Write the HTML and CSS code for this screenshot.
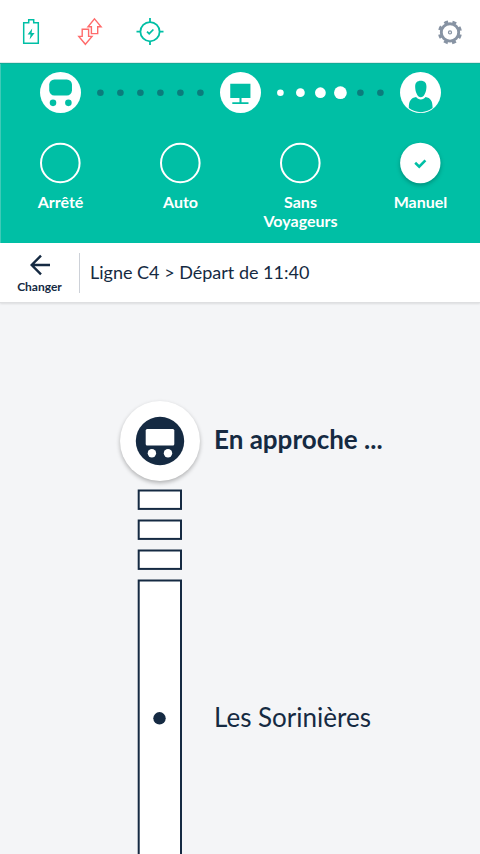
FILE: index.html
```html
<!DOCTYPE html>
<html lang="fr">
<head>
<meta charset="utf-8">
<meta name="viewport" content="width=device-width, initial-scale=1">
<title>Ligne C4</title>
<link rel="stylesheet" href="styles.css">
</head>
<body>
<header class="status">
  <svg class="status-icon" viewBox="0 0 60 62" fill="none" stroke="#00bfa5" stroke-width="1.5"><path d="M23.7 22.7h5V19.8h5v2.9h4.6v20.6H23.7z"/><path d="M32.2 28.6l-4.6 6h3l-1 5 5-6.600h-3z" fill="#00bfa5" stroke="none"/></svg>
  <svg class="status-icon" viewBox="60 0 60 62" fill="none" stroke="#ff6b6b" stroke-width="1.4"><path d="M94.500 18.900l6.600 7.900h-3.400v6.800h-6.300v-6.800H88z"/><path d="M85.400 44.300l6.600-7.900h-3.400v-7.200h-6.400v7.200h-3.400z"/></svg>
  <svg class="status-icon" viewBox="120 0 60 62" fill="none" stroke="#00bfa5" stroke-width="1.8"><circle cx="150" cy="31.700" r="9.600"/><path d="M150 18v4.400M150 41v4M136.500 31.700h4M159.500 31.700h4"/><path d="M147 31.600l2.200 2.100 4.200-4.200" stroke-width="1.700"/></svg>
  <svg class="status-icon settings" viewBox="420 0 60 62" fill="none" stroke="#8793a3"><circle cx="450" cy="32.400" r="8.700" stroke-width="2.900"/><circle cx="450" cy="32.400" r="10.600" stroke-width="2.800" stroke-dasharray="4 4.325" transform="rotate(11.500 450 32.400)"/><circle cx="450" cy="32.400" r="1.500" stroke-width="1.300"/></svg>
</header>

<section class="panel">
  <div class="link">
    <svg class="node" viewBox="0 0 40 40"><circle cx="20" cy="20" r="20" fill="#fff"/><g fill="#00bfa5"><rect x="9" y="7.300" width="22.200" height="15.600" rx="5"/><circle cx="12.700" cy="30.100" r="3.200"/><circle cx="27.700" cy="30.100" r="3.200"/></g></svg>
    <svg class="dots" viewBox="0.600 0.300 120 20" fill="#0b7c7c"><circle cx="10" cy="10" r="3.300"/><circle cx="30" cy="10" r="3.300"/><circle cx="50" cy="10" r="3.300"/><circle cx="70" cy="10" r="3.300"/><circle cx="90" cy="10" r="3.300"/><circle cx="110" cy="10" r="3.300"/></svg>
    <svg class="node" viewBox="0 0 40 40"><circle cx="20" cy="20" r="20" fill="#fff"/><path d="M10 11.500h19.700v13.800H21v4.100h6.800v1.900H12v-1.900h7v-4.100h-9z" fill="#00bfa5"/></svg>
    <svg class="dots" viewBox="0.600 0.300 120 20" fill="#0b7c7c"><g fill="#fff"><circle cx="10" cy="10" r="3.300"/><circle cx="30" cy="10" r="4.400"/><circle cx="50" cy="10" r="5.400"/><circle cx="70" cy="10" r="6.400"/></g><circle cx="90" cy="10" r="3.300"/><circle cx="110" cy="10" r="3.300"/></svg>
    <svg class="node" viewBox="0 0 40 40"><circle cx="20" cy="20" r="20" fill="#fff"/><path d="M20.300 8.600c3.700 0 5.700 2.200 5.500 6.200-.2 4.800-2.300 9.800-5.500 9.800s-5.300-5-5.500-9.800c-.2-4 1.800-6.200 5.500-6.200zM15.700 24.500c1.100 1.300 2.600 2.300 4.600 2.300s3.500-1 4.600-2.300c4.900 1 6.900 3.600 6.900 10.700A19 19 0 0 1 8.600 35.200C8.600 28.100 10.800 25.500 15.700 24.500z" fill="#00bfa5"/></svg>
  </div>
  <div class="modes">
    <div class="mode"><svg class="radio" viewBox="0 0 42 42"><circle cx="21.300" cy="21" r="19.300"/></svg><span>Arrêté</span></div>
    <div class="mode"><svg class="radio" viewBox="0 0 42 42"><circle cx="21.300" cy="21" r="19.300"/></svg><span>Auto</span></div>
    <div class="mode"><svg class="radio" viewBox="0 0 42 42"><circle cx="21.300" cy="21" r="19.300"/></svg><span>Sans<br>Voyageurs</span></div>
    <div class="mode"><svg class="radio checked" viewBox="0 0 42 42"><circle cx="21.300" cy="21" r="20.200"/><path d="M16.200 20.800l4 3.800 6.200-6.300"/></svg><span>Manuel</span></div>
  </div>
</section>

<nav class="line-bar">
  <div class="change">
    <svg width="22" height="22" viewBox="0 0 22 22" fill="none" stroke="#152a42" stroke-width="2.400"><path d="M21 11H2.800M12 1.700L2.700 11l9.300 9.300"/></svg>
    <span>Changer</span>
  </div>
  <div class="line-name">Ligne C4 &gt; Départ de 11:40</div>
</nav>

<main class="route">
  <div class="row vehicle-row">
    <div class="vehicle"><svg width="50" height="50" viewBox="0 0 50 50"><circle cx="25" cy="25" r="24.200" fill="#152a42"/><g fill="#fff"><rect x="10.700" y="13" width="28.600" height="16.600" rx="1.500"/><circle cx="16.900" cy="37.200" r="4.200"/><circle cx="33" cy="37.200" r="4.200"/></g></svg></div>
    <div class="approach">En approche ...</div>
  </div>
  <div class="row track-row">
    <svg class="track" width="80" height="371" viewBox="120 483 80 371"><g fill="#fff" stroke="#152a42" stroke-width="2"><rect x="138.700" y="490.500" width="42.300" height="18.400"/><rect x="138.700" y="520.500" width="42.300" height="18.400"/><rect x="138.700" y="550.500" width="42.300" height="18.400"/><rect x="138.700" y="580.500" width="42.300" height="300"/></g><circle cx="159.500" cy="718.300" r="6.200" fill="#152a42"/></svg>
    <div class="stop">Les Sorinières</div>
  </div>
</main>
</body>
</html>
```
FILE: styles.css
```css
* { box-sizing: border-box; }
body {
  margin: 0;
  width: 480px;
  height: 854px;
  overflow: hidden;
  background: #f4f5f7;
  color: #152a42;
  font-family: Lato, "Liberation Sans", sans-serif;
}
svg { display: block; }
.status {
  display: flex;
  height: 63px;
  background: #fff;
  border-bottom: 1px solid #dcebea;
}
.status-icon { width: 60px; height: 62px; }
.settings { margin-left: auto; }
.panel {
  height: 180px;
  background: #00bfa5;
  box-shadow: inset 0 1px 0 #10ac97, inset 1px 0 0 #3fcab7;
}
.link {
  display: flex;
  align-items: center;
  justify-content: space-between;
  padding: 9px 39px 0 40px;
}
.node { width: 41px; height: 41px; flex: none; }
.dots { width: 120px; height: 20px; flex: none; }
.modes {
  display: grid;
  grid-template-columns: repeat(4, 120px);
  padding-top: 29px;
}
.mode {
  display: flex;
  flex-direction: column;
  align-items: center;
  gap: 8px;
  color: #fff;
  font-size: 16px;
  font-weight: 700;
  line-height: 19px;
  text-align: center;
}
.mode span { padding-left: 1px; }
.radio {
  width: 42px;
  height: 42px;
  fill: none;
  stroke: #fff;
  stroke-width: 2;
}
.checked { filter: drop-shadow(0 2px 2px rgba(0, 0, 0, .25)); }
.checked circle { fill: #fff; stroke: none; }
.checked path { stroke: #00bfa5; stroke-width: 2.600; }
.line-bar {
  display: flex;
  align-items: center;
  height: 60px;
  background: #fff;
  border-bottom: 1px solid #dedfe1;
  box-shadow: 0 1px 2px rgba(0, 0, 0, .1);
}
.change {
  display: flex;
  flex-direction: column;
  align-items: center;
  gap: 3px;
  width: 80px;
  height: 40px;
  padding-top: 1px;
  border-right: 1px solid #cdd1d8;
  font-size: 12px;
  font-weight: 700;
  line-height: 16px;
}
.change svg { flex: none; }
.line-name { padding: 0 0 2px 10px; font-size: 18px; line-height: 24px; }
.route { padding: 98px 0 0 120px; }
.row { display: flex; gap: 14px; }
.vehicle-row { height: 82px; }
.vehicle {
  display: grid;
  place-items: center;
  width: 80px;
  height: 80px;
  border-radius: 50%;
  background: #fff;
  box-shadow: 0 2px 4px rgba(0, 0, 0, .28);
}
.approach { padding-top: 22px; font-size: 26px; font-weight: 700; line-height: 32px; }
.stop { padding-top: 218px; font-size: 26px; line-height: 32px; }
```
